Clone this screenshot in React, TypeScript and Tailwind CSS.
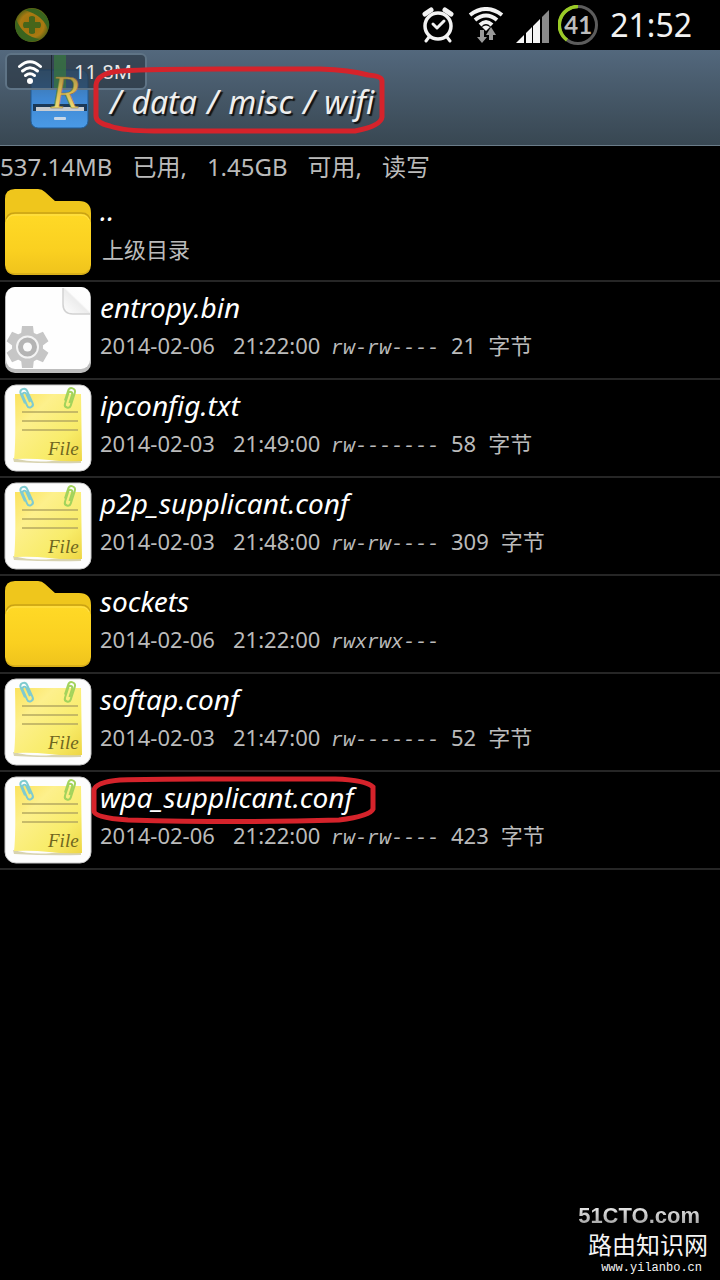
import React from "react";

type Kind = "folder" | "bin" | "note";

interface Entry {
  name: string;
  kind: Kind;
  date?: string;
  time?: string;
  perms?: string;
  size?: string;
  label?: string;
  marked?: boolean;
}

const entries: Entry[] = [
  { name: "..", kind: "folder", label: "上级目录" },
  { name: "entropy.bin", kind: "bin", date: "2014-02-06", time: "21:22:00", perms: "rw-rw----", size: "21" },
  { name: "ipconfig.txt", kind: "note", date: "2014-02-03", time: "21:49:00", perms: "rw-------", size: "58" },
  { name: "p2p_supplicant.conf", kind: "note", date: "2014-02-03", time: "21:48:00", perms: "rw-rw----", size: "309" },
  { name: "sockets", kind: "folder", date: "2014-02-06", time: "21:22:00", perms: "rwxrwx---" },
  { name: "softap.conf", kind: "note", date: "2014-02-03", time: "21:47:00", perms: "rw-------", size: "52" },
  { name: "wpa_supplicant.conf", kind: "note", date: "2014-02-06", time: "21:22:00", perms: "rw-rw----", size: "423", marked: true },
];

function FolderIcon() {
  return (
    <svg width="88" height="88" viewBox="0 0 88 88" aria-hidden="true">
      <defs>
        <linearGradient id="folderFront" x1="0" y1="0" x2="0" y2="1">
          <stop offset="0" stopColor="#ffd926" />
          <stop offset="0.6" stopColor="#fad020" />
          <stop offset="1" stopColor="#efc31c" />
        </linearGradient>
      </defs>
      <path d="M1 32V11Q1 1 11 1H34Q38 1 41 4L51 13H75Q87 13 87 25V40H1Z" fill="#efc61c" />
      <path d="M2 34Q2 25 11 25H77Q86 25 86 34" fill="none" stroke="#c9a214" strokeWidth="1.5" />
      <rect x="1" y="26" width="86" height="61" rx="10" fill="url(#folderFront)" />
      <path d="M3 32Q5 27 11 27H77Q83 27 85 32" fill="none" stroke="#ffe24f" strokeWidth="1" />
      <path d="M3 82Q5 86 11 86H77Q83 86 85 82" fill="none" stroke="#d4ab18" strokeWidth="1.5" />
    </svg>
  );
}

function BinIcon() {
  return (
    <svg width="88" height="88" viewBox="0 0 88 88" aria-hidden="true">
      <defs>
        <linearGradient id="curl" x1="0" y1="1" x2="1" y2="0">
          <stop offset="0" stopColor="#ffffff" />
          <stop offset="0.5" stopColor="#ececec" />
          <stop offset="0.55" stopColor="#fdfdfd" />
          <stop offset="1" stopColor="#ffffff" />
        </linearGradient>
      </defs>
      <rect x="1" y="1" width="86" height="86" rx="10" fill="#bdbdbd" />
      <rect x="2" y="1" width="84" height="82" rx="9" fill="#fefefe" />
      <path d="M59 2V18Q59 28 69 28H86V10Q84 2 76 2Z" fill="url(#curl)" />
      <path d="M59 2V18Q59 28 69 28H86" fill="none" stroke="#d2d2d2" strokeWidth="1.5" />
      <g fill="#c6c6c6">
        {[0, 60, 120].map((angle) => (
          <path
            key={angle}
            d="M18 40H29L30 49H17ZM17 73H30L29 82H18Z"
            transform={`rotate(${angle} 23.5 61)`}
          />
        ))}
        <circle cx="23.5" cy="61" r="15.5" />
      </g>
      <circle cx="23.5" cy="61" r="10.5" fill="#b4b4b4" stroke="#f4f4f4" strokeWidth="2" />
      <circle cx="23.5" cy="61" r="4.5" fill="#fafafa" />
    </svg>
  );
}

function NoteIcon() {
  return (
    <svg width="88" height="88" viewBox="0 0 88 88" aria-hidden="true">
      <defs>
        <linearGradient id="paper" x1="0" y1="0" x2="1" y2="1">
          <stop offset="0" stopColor="#fbe25c" />
          <stop offset="0.3" stopColor="#fdf08c" />
          <stop offset="0.7" stopColor="#f8ec6a" />
          <stop offset="1" stopColor="#eed644" />
        </linearGradient>
      </defs>
      <rect x="1" y="1" width="86" height="86" rx="11" fill="#fdfdfd" stroke="#c8c8c8" />
      <path d="M9 74Q28 79 48 77T77 77V79Q46 80 10 78Z" fill="#d8d3b0" />
      <path d="M11 10H77L78 77Q62 78 45 76T10 75Q12 60 11 10Z" fill="url(#paper)" />
      <path d="M18 28H74M18 37H74M18 46H74" stroke="#b5a960" strokeWidth="1.5" />
      <g fill="none" strokeWidth="2" transform="rotate(-24 23 14)" stroke="#7fcbd0">
        <path d="M19 18V8Q19 4 22.5 4T26 8V21Q26 24 23 24T20 21V10Q20 8 22 8T24 10V19" />
      </g>
      <g fill="none" strokeWidth="2" transform="rotate(18 66 14)" stroke="#a3d35c">
        <path d="M62 18V8Q62 4 65.5 4T69 8V21Q69 24 66 24T63 21V10Q63 8 65 8T67 10V19" />
      </g>
      <text x="44" y="71" fill="#6f661f" fontSize="19" fontStyle="italic" fontFamily="Liberation Serif, serif">
        File
      </text>
    </svg>
  );
}

function EntryIcon({ kind }: { kind: Kind }) {
  if (kind === "folder") return <FolderIcon />;
  if (kind === "bin") return <BinIcon />;
  return <NoteIcon />;
}

function WifiGlyph() {
  return (
    <svg width="26" height="26" viewBox="0 0 26 26" aria-hidden="true">
      <g fill="none" stroke="#fff" strokeWidth="3" strokeLinecap="round">
        <path d="M2.5 7.5Q13 -2 23.5 7.5" />
        <path d="M5.5 12Q13 5.5 20.5 12" />
        <path d="M8.5 16.5Q13 13 17.5 16.5" />
      </g>
      <circle cx="13" cy="22" r="3" fill="#fff" />
    </svg>
  );
}

function StatusBar() {
  return (
    <div className="flex h-[50px] items-center justify-between bg-black pl-3.5 pr-7">
      <svg width="36" height="36" viewBox="0 0 36 36" role="img" aria-label="Security">
        <defs>
          <radialGradient id="ball">
            <stop offset="0" stopColor="#a06c08" />
            <stop offset="0.7" stopColor="#a97a12" />
            <stop offset="1" stopColor="#5a6414" />
          </radialGradient>
        </defs>
        <circle cx="18" cy="18" r="17" fill="url(#ball)" />
        <path d="M11 3Q22 -1 30 7T34 23Q30 9 11 3ZM2 12Q-1 25 8 32Q17 37 26 32Q9 30 2 12Z" fill="#3a641e" />
        <path d="M15 10Q18 8 21 10V15H26Q28 18 26 21H21V26Q18 28 15 26V21H10Q8 18 10 15H15Z" fill="#46651a" />
      </svg>
      <div className="flex items-center">
        <svg width="34" height="36" viewBox="0 0 34 36" role="img" aria-label="Alarm">
          <g fill="none" stroke="#f2f2f2" strokeLinecap="round">
            <circle cx="16" cy="19" r="13" strokeWidth="3.5" />
            <path d="M7 30L4 34M25 30L28 34" strokeWidth="3" />
            <path d="M11 17L15 21L22 14" strokeWidth="3" strokeLinejoin="round" />
            <path d="M3 7L9 3M29 7L23 3" strokeWidth="5" />
          </g>
        </svg>
        <svg className="ml-3" width="36" height="36" viewBox="0 0 36 36" role="img" aria-label="Wi-Fi">
          <g fill="none" stroke="#f2f2f2" strokeWidth="4">
            <path d="M2 8Q18 -4 34 8" />
            <path d="M7 13Q18 4 29 13" />
            <path d="M12 18Q18 12 24 18" />
          </g>
          <path d="M14 20Q18 17 22 20L18 24Z" fill="#f2f2f2" />
          <path d="M12 23H16V30H19L14 36L9 30H12ZM21 33V28H18L23 20L28 28H25V33Z" fill="#999" />
        </svg>
        <svg className="ml-3" width="34" height="36" viewBox="0 0 34 36" role="img" aria-label="Signal">
          <path d="M0 36L8 28V36ZM10 26L16 20V36H10ZM17 19L24 12V36H17Z" fill="#f5f5f5" />
          <path d="M26 10L33 3V36H26Z" fill="#8a8a8a" />
        </svg>
        <div className="relative ml-2 flex size-10 items-center justify-center">
          <svg className="absolute inset-0" width="40" height="40" viewBox="0 0 40 40" aria-hidden="true">
            <circle cx="20" cy="20" r="18.5" fill="none" stroke="#5c5c5c" strokeWidth="3" />
            <path d="M20 1.5A18.5 18.5 0 0 0 9 35" fill="none" stroke="#9acb26" strokeWidth="3.5" />
          </svg>
          <span className="text-2xl leading-6 font-bold text-[#bdbdbd] [font-family:Lato,sans-serif]">41</span>
        </div>
        <span className="ml-3 text-[32px] leading-9 text-[#f2f2f2] [font-family:'Noto_Sans',sans-serif]">21:52</span>
      </div>
    </div>
  );
}

function Header() {
  return (
    <header className="relative flex h-24 items-center border-b border-[#6b7c89] bg-linear-to-b from-[#53687d] to-[#384752] pl-[30px]">
      <svg width="60" height="76" viewBox="0 0 60 76" role="img" aria-label="Root Explorer">
        <defs>
          <linearGradient id="cabinet" x1="0" y1="0" x2="0" y2="1">
            <stop offset="0" stopColor="#3c6f9e" />
            <stop offset="0.5" stopColor="#3f87d2" />
            <stop offset="1" stopColor="#4a9ae6" />
          </linearGradient>
        </defs>
        <rect x="1" y="10" width="57" height="58" rx="7" fill="url(#cabinet)" stroke="#215b94" />
        <path d="M3 44H57V51H3Z" fill="#1b3958" />
        <path d="M6 47H54V51H6Z" fill="#c8ccd0" />
        <rect x="24" y="57" width="12" height="3" rx="1" fill="#c9d8e8" />
      </svg>
      <h1 className="ml-5 flex gap-2.5 pt-2 text-[32px] leading-8 text-[#eee] italic [font-family:'Noto_Sans',sans-serif] [text-shadow:2px_2px_1px_#111]">
        <span>/</span>
        <span>data</span>
        <span>/</span>
        <span>misc</span>
        <span>/</span>
        <span>wifi</span>
      </h1>
      <div className="absolute left-[5px] top-[3px] flex h-[37px] w-[142px] items-center rounded-md border-2 border-[#5f7486] bg-[#26323d]/60 pl-2.5">
        <WifiGlyph />
        <span className="ml-2 h-full w-px bg-[#1d2731]" />
        <span className="ml-0.5 h-full w-3 bg-[#37793e]/70" />
        <span className="ml-2 text-xl leading-4 text-[#e8e8e8] [font-family:'Noto_Sans',sans-serif]">11.8M</span>
      </div>
      <svg className="absolute left-[46px] top-2" width="48" height="64" viewBox="0 0 48 64" aria-hidden="true">
        <defs>
          <linearGradient id="gold" x1="0" y1="0" x2="0" y2="1">
            <stop offset="0" stopColor="#94803f" />
            <stop offset="0.5" stopColor="#d9bb55" />
            <stop offset="1" stopColor="#fff08c" />
          </linearGradient>
        </defs>
        <text
          x="5"
          y="50"
          fill="url(#gold)"
          stroke="#7b6a2c"
          strokeWidth="0.5"
          fontSize="46"
          fontStyle="italic"
          fontFamily="Liberation Serif, serif"
        >
          R
        </text>
      </svg>
      <svg className="absolute left-[92px] top-4" width="294" height="70" viewBox="0 0 294 70" aria-hidden="true">
        <path
          d="M29 5Q60 3 130 3H228Q258 4 276 9Q290 10 290 15V51Q289 60 263 65H62Q32 65 18 60Q4 57 4 50V19Q5 7 29 5Z"
          fill="none"
          stroke="#d5232b"
          strokeWidth="5"
        />
      </svg>
    </header>
  );
}

function Row({ entry }: { entry: Entry }) {
  return (
    <li className="relative border-b-2 border-[#262626]">
      <button type="button" className="flex h-24 w-full items-center gap-2 pl-1 text-left">
        <EntryIcon kind={entry.kind} />
        <span className="flex flex-col pb-2">
          <span className="text-[28px] leading-10 text-white italic [font-family:'Noto_Sans',sans-serif]">{entry.name}</span>
          {entry.label ? (
            <span className="pl-0.5 text-[22px] leading-9 text-[#bbb] [font-family:'Noto_Sans_CJK_SC',sans-serif]">{entry.label}</span>
          ) : (
            <span className="flex items-baseline text-[22px] leading-9 text-[#bbb] [font-family:'Noto_Sans','Noto_Sans_CJK_SC',sans-serif]">
              <span className="w-[133px]">{entry.date}</span>
              <span className="w-[98px]">{entry.time}</span>
              <span className="text-xl leading-8 italic [font-family:'Liberation_Mono',monospace]">{entry.perms}</span>
              {entry.size && (
                <span className="flex gap-3 pl-3">
                  <span>{entry.size}</span>
                  <span>字节</span>
                </span>
              )}
            </span>
          )}
        </span>
      </button>
      {entry.marked && (
        <svg className="absolute left-[90px] top-1" width="286" height="48" viewBox="0 0 286 48" aria-hidden="true">
          <path
            d="M30 4Q60 3 110 3H245Q276 4 283 11V33Q280 40 249 44Q150 47 38 44Q4 42 4 35V14Q6 6 30 4Z"
            fill="none"
            stroke="#d5232b"
            strokeWidth="5"
          />
        </svg>
      )}
    </li>
  );
}

export default function App() {
  return (
    <div className="flex min-h-screen flex-col bg-black">
      <StatusBar />
      <Header />
      <main>
        <p className="flex h-[38px] items-center gap-5 pt-1 text-2xl leading-8 whitespace-nowrap text-[#bbb] [font-family:'Noto_Sans','Noto_Sans_CJK_SC',sans-serif]">
          <span>537.14MB</span>
          <span>已用,</span>
          <span>1.45GB</span>
          <span>可用,</span>
          <span>读写</span>
        </p>
        <ul>
          {entries.map((entry) => (
            <Row key={entry.name} entry={entry} />
          ))}
        </ul>
      </main>
      <footer className="mt-auto flex flex-col items-end pr-3 pb-1">
        <span className="mr-2 bg-linear-to-b from-[#f4f4f4] to-[#999] bg-clip-text text-[22px] leading-6 font-black text-transparent [font-family:'Liberation_Sans',sans-serif]">
          51CTO.com
        </span>
        <span className="text-2xl leading-8 text-[#f4f4f4] [font-family:'Noto_Sans_CJK_SC',sans-serif]">路由知识网</span>
        <a href="#site" className="mr-1.5 text-xs leading-4 text-[#f4f4f4] [font-family:'Liberation_Mono',monospace]">
          www.yilanbo.cn
        </a>
      </footer>
    </div>
  );
}
